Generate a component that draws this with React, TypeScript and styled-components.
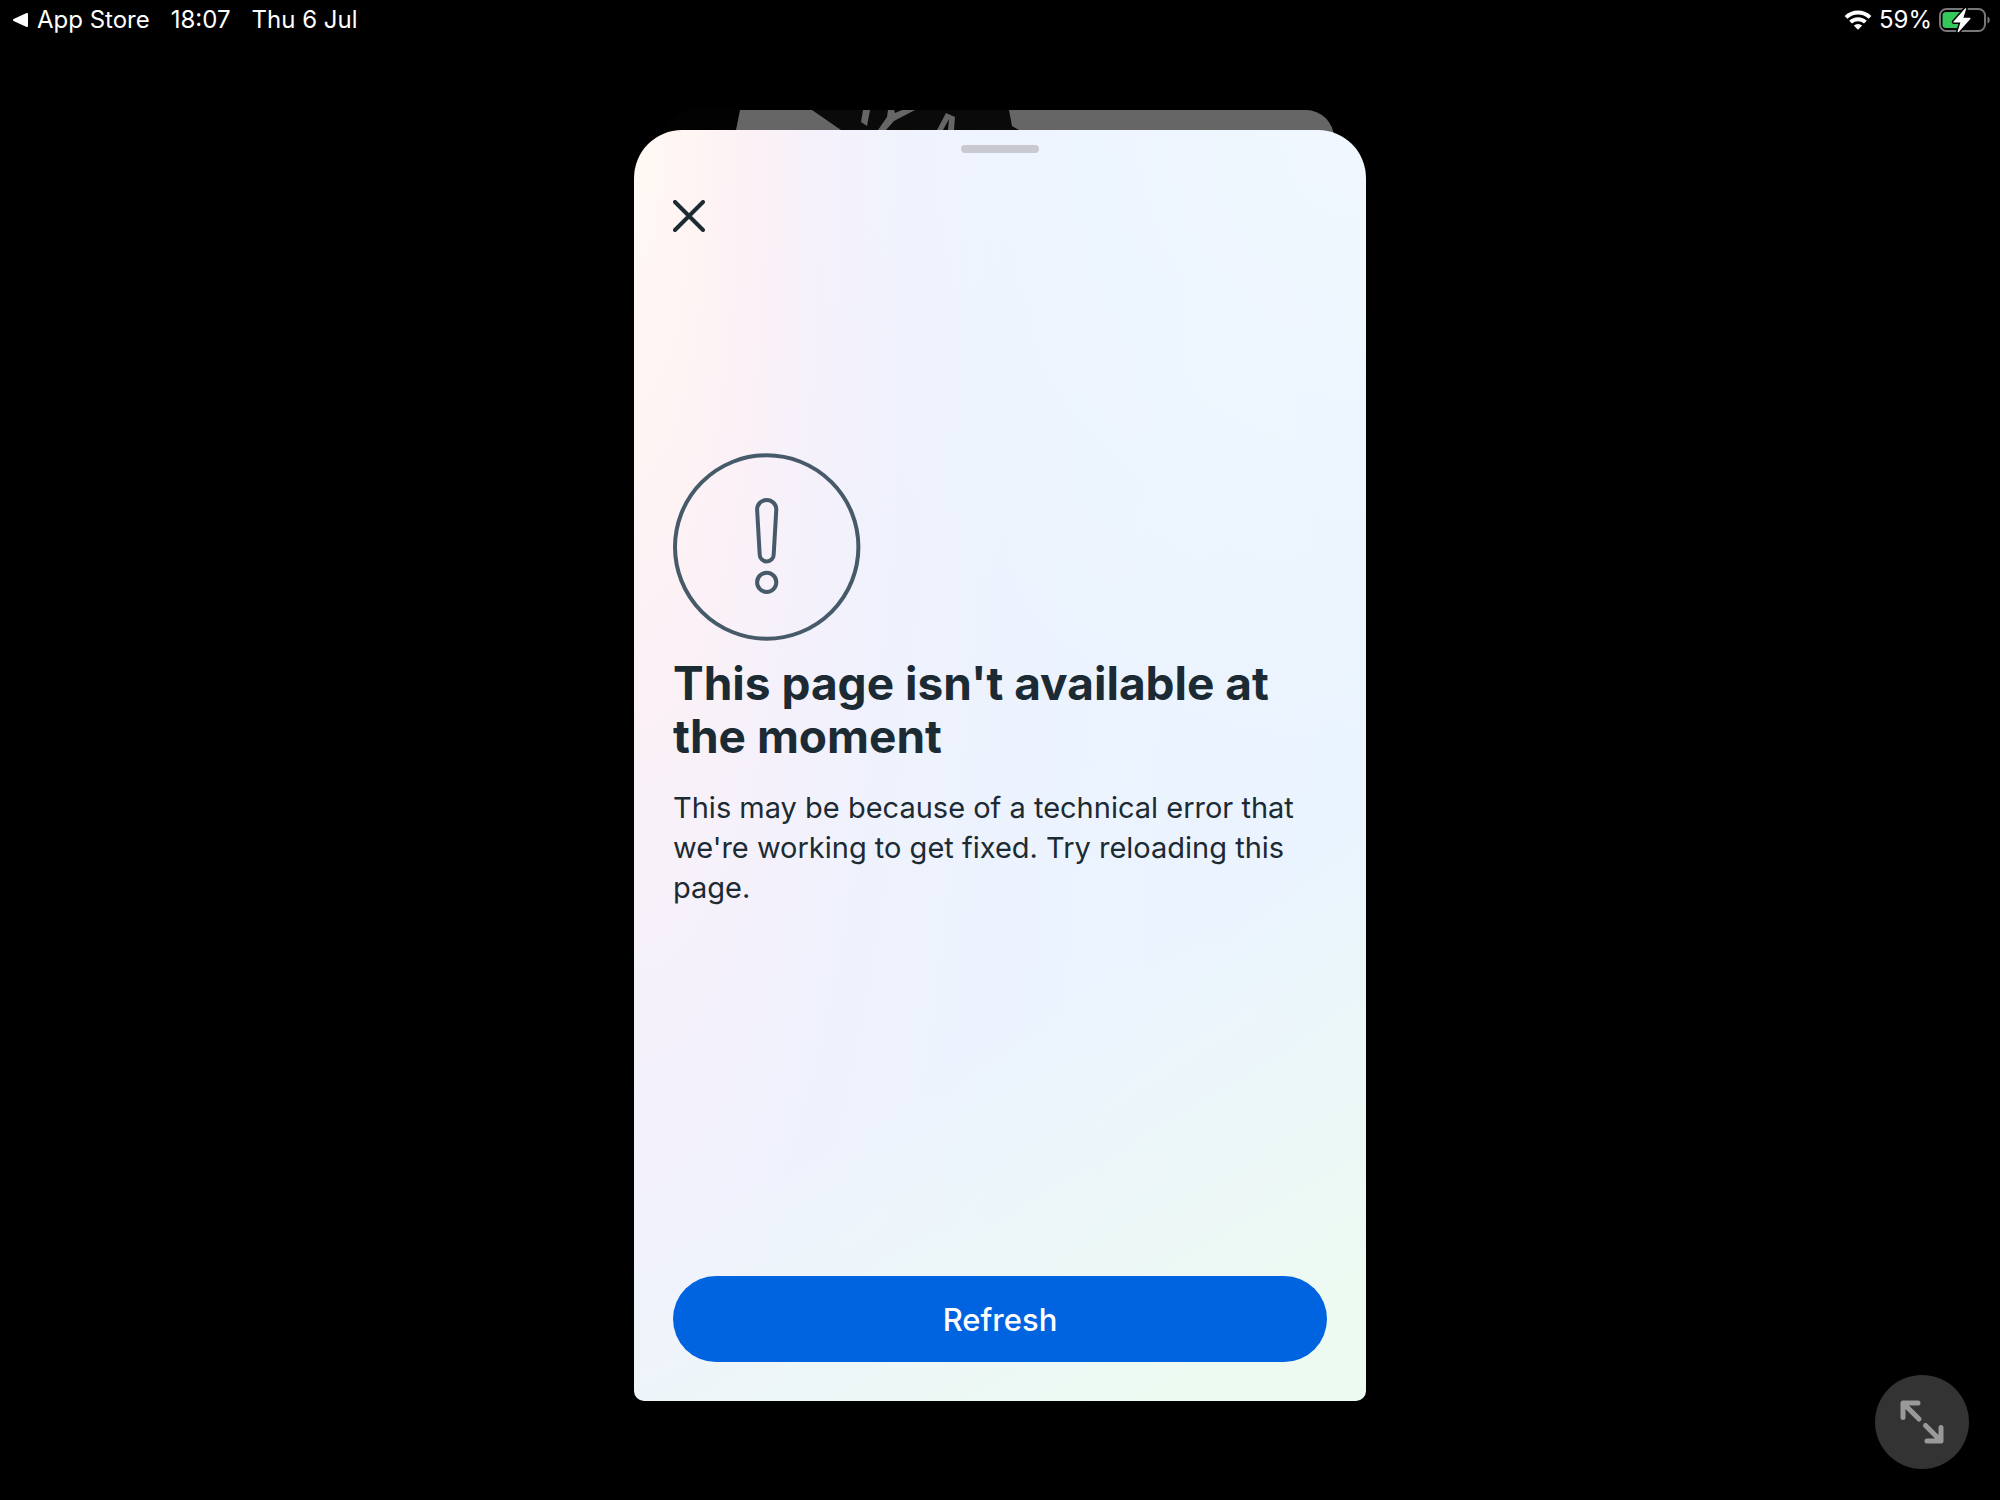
import React from "react";
import styled, { createGlobalStyle } from "styled-components";

const GlobalStyle = createGlobalStyle`
  *, *::before, *::after { box-sizing: border-box; }
  body {
    margin: 0;
    background: #000;
    font-family: Inter, "Liberation Sans", sans-serif;
  }
  button { font: inherit; cursor: pointer; }
`;

const Screen = styled.div`
  display: flex;
  flex-direction: column;
  min-height: 100vh;
  background: #000;
`;

const StatusBar = styled.header`
  display: flex;
  justify-content: space-between;
  align-items: center;
  height: 40px;
  padding: 0 9px 0 12px;
  color: #fff;
  font-size: 24px;
  line-height: 28px;
`;

const StatusGroup = styled.div<{ $gap: number }>`
  display: flex;
  align-items: center;
  gap: ${(p) => p.$gap}px;
`;

const BackLink = styled.a`
  display: flex;
  align-items: center;
  gap: 8px;
  color: inherit;
  text-decoration: none;
`;

const Stage = styled.main`
  flex: 1;
  display: flex;
  flex-direction: column;
  align-items: center;
  padding: 70px 0 99px;
`;

const PreviousCard = styled.div`
  width: 668px;
  max-width: 92%;
  height: 40px;
  margin-bottom: -20px;
  border-radius: 28px 28px 0 0;
  overflow: hidden;
  background: linear-gradient(90deg, #020202 50%, #666 50%);

  svg { display: block; }
`;

const Sheet = styled.section`
  flex: 1;
  display: flex;
  flex-direction: column;
  width: 732px;
  max-width: 100%;
  padding: 15px 39px 39px;
  border-radius: 48px 48px 10px 10px;
  z-index: 1;
  background:
    linear-gradient(150deg, rgba(237, 250, 242, 0) 66%, rgba(237, 250, 242, 1) 92%),
    radial-gradient(80% 50% at 100% 0%, rgba(240, 247, 255, 1) 0%, rgba(240, 247, 255, 0) 100%),
    radial-gradient(100% 260% at 0% 0%, #fff9f4 0%, #fff5f3 8%, #fcf1f6 16%, #f5f1fb 26%, #eff2fd 38%, #ecf3fe 56%, #eaf4fe 100%);
`;

const Handle = styled.div`
  align-self: center;
  width: 78px;
  height: 8px;
  border-radius: 4px;
  background: #c8cacf;
`;

const CloseButton = styled.button`
  display: flex;
  align-self: flex-start;
  margin: 47px 0 0;
  padding: 0;
  border: 0;
  background: none;
  color: #1c2b33;
`;

const Message = styled.div`
  flex: 1;
  padding: 221px 0 40px;
  color: #1c2b33;

  svg { display: block; }
`;

const Title = styled.h1`
  margin: 16px 0 0;
  font-size: 46px;
  line-height: 53px;
  font-weight: 700;
`;

const Description = styled.p`
  margin: 25px 0 0;
  font-size: 29px;
  line-height: 40px;
`;

const RefreshButton = styled.button`
  height: 86px;
  border: 0;
  border-radius: 43px;
  background: #0064e0;
  color: #fff;
  && {
    font-size: 31px;
    font-weight: 500;
  }
`;

const ExpandButton = styled.button`
  position: fixed;
  right: 31px;
  bottom: 31px;
  display: flex;
  align-items: center;
  justify-content: center;
  width: 94px;
  height: 94px;
  padding: 0;
  border: 0;
  border-radius: 50%;
  background: #333;
  color: #999;
`;

const BackTriangle = () => (
  <svg width="17" height="16" viewBox="0 0 17 16" aria-hidden="true">
    <path d="M2 8 15 2v12Z" fill="#fff" stroke="#fff" strokeWidth="2" strokeLinejoin="round" />
  </svg>
);

const WifiIcon = () => (
  <svg width="28" height="20" viewBox="0 0 28 20" aria-label="Wi-Fi" role="img">
    <g fill="none" stroke="#fff" strokeWidth="4">
      <path d="M2 7.400a17 17 0 0 1 24 0" />
      <path d="M6.600 12.200a10.500 10.500 0 0 1 14.800 0" />
    </g>
    <path d="M9.800 15.600a6 6 0 0 1 8.400 0L14 19.800Z" fill="#fff" />
  </svg>
);

const BatteryIcon = () => (
  <svg width="52" height="26" viewBox="0 0 52 26" aria-label="Charging" role="img">
    <rect x="1" y="2" width="45" height="22" rx="6.5" fill="none" stroke="#77777a" strokeWidth="2" />
    <path d="M48.5 9.5c3 1 3 6 0 7Z" fill="#77777a" />
    <path d="M7 5h17v16H7a3.500 3.500 0 0 1-3.500-3.500v-9A3.500 3.500 0 0 1 7 5Z" fill="#34c759" />
    <path
      d="M26 1.500 14.500 14.400c-.5.6-.2 1.200.5 1.200h6.400L18.600 24.500c-.2.8.7 1.100 1.200.5L31.300 12c.5-.6.2-1.200-.5-1.200h-6.400L27.200 2c.3-.8-.6-1.100-1.200-.5Z"
      fill="#fff" stroke="#000" strokeWidth="3" paintOrder="stroke"
    />
  </svg>
);

const CardArtwork = () => (
  <svg width="668" height="40" viewBox="0 0 668 40" aria-hidden="true">
    <path d="M146 0h197l3 16 7 4v20H175V20Z" fill="#0a0a0a" />
    <g fill="#666">
      <path d="M74 0h72l29 20v20H70V20Z" />
      <path d="M197 0h7l-3 16-6-4Z" />
      <path d="M222 0h6l1 3 7-3h13l-21 11-8 9h-8l9-13Z" />
      <path d="m271 20 9-17 9 4-1 13h-6l1-11-6 11Z" />
    </g>
  </svg>
);

const CloseIcon = () => (
  <svg width="32" height="32" viewBox="0 0 32 32" aria-hidden="true">
    <path d="m2 2 28 28M30 2 2 30" stroke="currentColor" strokeWidth="4" strokeLinecap="round" />
  </svg>
);

const AlertIcon = () => (
  <svg width="188" height="188" viewBox="0 0 188 188" fill="none" stroke="#465a69" strokeWidth="4" aria-hidden="true">
    <circle cx="93.700" cy="94" r="91.700" />
    <path d="M84.100 56.500a9.600 9.600 0 0 1 19.200 0L100.700 101.500a7 7 0 0 1-14 0Z" />
    <circle cx="93.700" cy="129.300" r="9.600" />
  </svg>
);

const ExpandIcon = () => (
  <svg width="44" height="44" viewBox="0 0 44 44" fill="none" stroke="currentColor" strokeWidth="5" strokeLinecap="round" strokeLinejoin="round" aria-hidden="true">
    <path d="M3 17.500V3h15M4 4l15 15M41 27.500V41H27M40 40 25.500 25.500" />
  </svg>
);

export default function App() {
  return (
    <Screen>
      <GlobalStyle />
      <StatusBar>
        <StatusGroup $gap={21}>
          <BackLink href="#app-store">
            <BackTriangle />
            App Store
          </BackLink>
          <span>18:07</span>
          <span>Thu 6 Jul</span>
        </StatusGroup>
        <StatusGroup $gap={7}>
          <WifiIcon />
          <span>59%</span>
          <BatteryIcon />
        </StatusGroup>
      </StatusBar>
      <Stage>
        <PreviousCard>
          <CardArtwork />
        </PreviousCard>
        <Sheet>
          <Handle />
          <CloseButton type="button" aria-label="Close">
            <CloseIcon />
          </CloseButton>
          <Message>
            <AlertIcon />
            <Title>This page isn't available at the moment</Title>
            <Description>
              This may be because of a technical error that we're working to get fixed. Try reloading this page.
            </Description>
          </Message>
          <RefreshButton type="button">Refresh</RefreshButton>
        </Sheet>
      </Stage>
      <ExpandButton type="button" aria-label="Expand">
        <ExpandIcon />
      </ExpandButton>
    </Screen>
  );
}
